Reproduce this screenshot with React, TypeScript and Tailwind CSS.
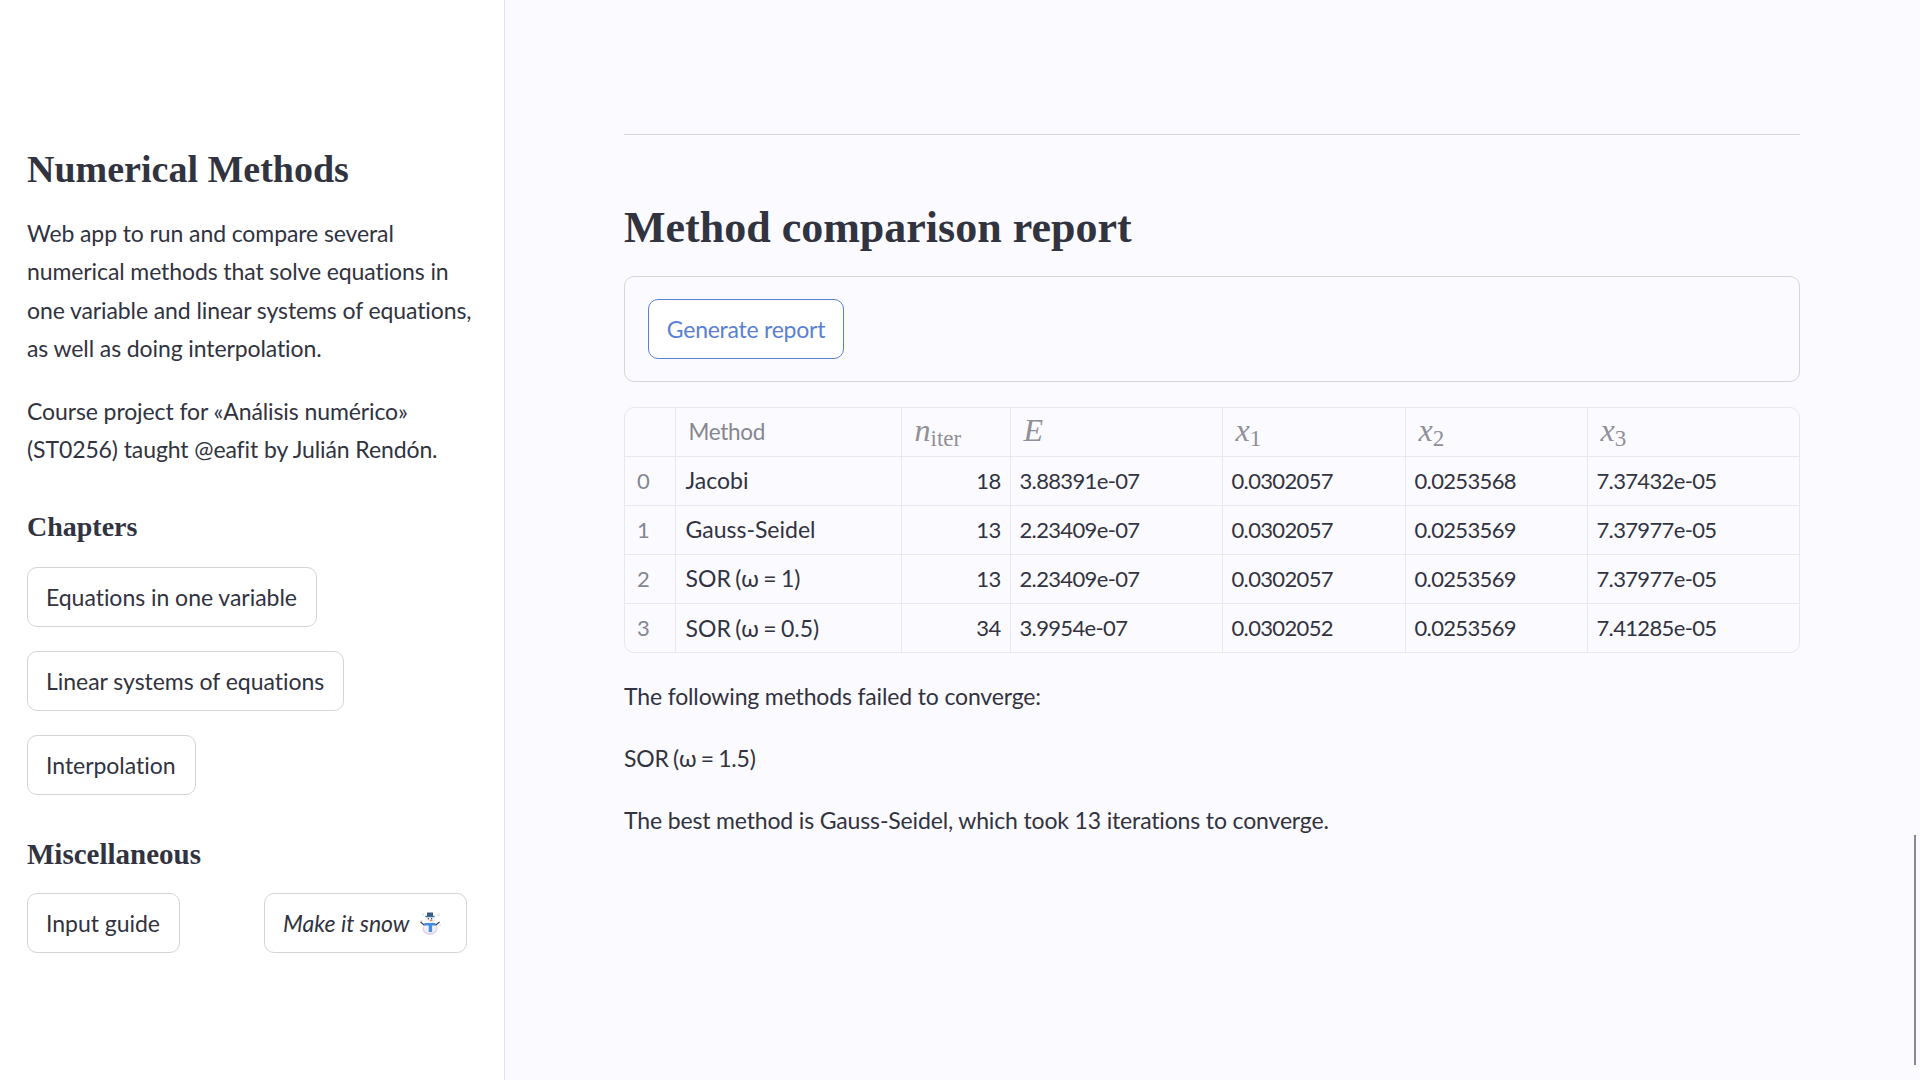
const sans = "font-['Lato','Noto_Sans',sans-serif]";

const rows = [
  ["0", "Jacobi", "18", "3.88391e-07", "0.0302057", "0.0253568", "7.37432e-05"],
  ["1", "Gauss-Seidel", "13", "2.23409e-07", "0.0302057", "0.0253569", "7.37977e-05"],
  ["2", "SOR (ω = 1)", "13", "2.23409e-07", "0.0302057", "0.0253569", "7.37977e-05"],
  ["3", "SOR (ω = 0.5)", "34", "3.9954e-07", "0.0302052", "0.0253569", "7.41285e-05"],
];

function SideButton({ label }: { label: string }) {
  return (
    <button className="h-[60px] w-fit rounded-[10px] border border-[#d5d5d9] bg-white pl-[18px] pr-[19px] text-left text-[23px] tracking-[-0.03px] text-[#31333f]">
      {label}
    </button>
  );
}

function Snowman() {
  return (
    <svg viewBox="0 0 24 24" className="ml-[8px] h-6 w-6">
      <circle cx="3.5" cy="10" r="1.3" fill="#e2dff0" />
      <circle cx="20.5" cy="4" r="1.3" fill="#e2dff0" />
      <circle cx="5" cy="3.5" r="1" fill="#e2dff0" />
      <circle cx="22" cy="14" r="1" fill="#e2dff0" />
      <ellipse cx="12" cy="17.5" rx="7.5" ry="6.5" fill="#dcd3ee" />
      <ellipse cx="12" cy="16.5" rx="6.5" ry="5.5" fill="#f3f0fa" />
      <circle cx="12" cy="8.5" r="5" fill="#f5f3fb" />
      <path d="M7.5 4.8h9v1.4h-9z" fill="#2f6f9e" />
      <path d="M9 1.5h6v3.5H9z" fill="#3a5c86" />
      <path d="M6.5 12h11v2.4h-3.4V21h-3.4v-6.6H6.5z" fill="#3f8ee8" />
      <path d="M12 8.6l3.4 1-3.4.9z" fill="#f08a3c" />
      <circle cx="10.4" cy="7.8" r=".7" fill="#333" />
      <circle cx="13.6" cy="7.8" r=".7" fill="#333" />
      <path d="M2.5 11l4 3.2M21.5 11l-4 3.2" stroke="#3b3f52" strokeWidth="1.2" />
    </svg>
  );
}

function MathHead({ base, sub }: { base: string; sub?: string }) {
  return (
    <span className="font-['Liberation_Serif',serif] text-[32px] leading-none text-[#8f9098]">
      <i>{base}</i>
      {sub && <span className="relative top-[5px] text-[23px]">{sub}</span>}
    </span>
  );
}

export default function App() {
  return (
    <div className={`flex h-screen overflow-hidden bg-[#fbfaff] text-[#31333f] ${sans}`}>
      {/* Sidebar */}
      <aside className="h-full w-[505px] shrink-0 border-r border-[#e3e2ea] bg-white pl-[27px] pr-[24px] pt-[145px]">
        <h2 className="font-['Liberation_Serif',serif] text-[38px] font-bold leading-[48px]">Numerical Methods</h2>
        <p className="mt-[21px] text-[23px] leading-[38.4px] tracking-[-0.1px]">
          Web app to run and compare several numerical methods that solve equations in one variable and linear systems of equations, as well as doing interpolation.
        </p>
        <p className="mt-6 text-[23px] leading-[38.4px] tracking-[-0.1px]">
          Course project for «Análisis numérico» (ST0256) taught @eafit by Julián Rendón.
        </p>
        <h3 className="mt-[41px] font-['Liberation_Serif',serif] text-[28px] font-bold leading-9">Chapters</h3>
        <div className="mt-[22px] flex flex-col gap-6">
          <SideButton label="Equations in one variable" />
          <SideButton label="Linear systems of equations" />
          <SideButton label="Interpolation" />
        </div>
        <h3 className="mt-[41px] font-['Liberation_Serif',serif] text-[29px] font-bold leading-9">Miscellaneous</h3>
        <div className="mt-[21px] grid grid-cols-[237px_1fr]">
          <SideButton label="Input guide" />
          <button className="flex h-[60px] w-[203px] items-center rounded-[10px] border border-[#d5d5d9] bg-white pl-[18px] text-[23px] italic">
            Make it snow
            <Snowman />
          </button>
        </div>
      </aside>

      {/* Main */}
      <main className="relative min-w-0 flex-1 pl-[119px] pr-[120px] pt-[134px]">
        <hr className="border-t border-[#d5d5dc]" />
        <h1 className="mt-[65px] font-['Liberation_Serif',serif] text-[44px] font-bold leading-[56px]">Method comparison report</h1>
        <div className="mt-[20px] rounded-[10px] border border-[#d5d5dc] pl-[23px] pt-[22px] pb-[22px]">
          <button className="h-[60px] w-[196px] rounded-[10px] border border-[#5b7fd6] bg-white text-[23px] tracking-[-0.25px] text-[#5b7fd6]">
            Generate report
          </button>
        </div>
        <div className="mt-[25px] overflow-hidden rounded-[10px] border border-[#e8e8ee]">
          <table className="w-full table-fixed border-collapse text-[22px] tracking-[-0.65px]">
            <colgroup>
              <col className="w-[50px]" />
              <col className="w-[226px]" />
              <col className="w-[109px]" />
              <col className="w-[212px]" />
              <col className="w-[183px]" />
              <col className="w-[182px]" />
              <col />
            </colgroup>
            <thead>
              <tr className="h-[48px] text-left">
                <th className="border-r border-[#e8e8ee]" />
                <th className="border-r border-[#e8e8ee] pl-[13px] text-[22.5px] font-normal tracking-[-0.3px] text-[#85868f]">Method</th>
                <th className="border-r border-[#e8e8ee] pl-[13px] font-normal tracking-normal"><MathHead base="n" sub="iter" /></th>
                <th className="border-r border-[#e8e8ee] pl-[13px] font-normal tracking-normal"><MathHead base="E" /></th>
                <th className="border-r border-[#e8e8ee] pl-[13px] font-normal tracking-normal"><MathHead base="x" sub="1" /></th>
                <th className="border-r border-[#e8e8ee] pl-[13px] font-normal tracking-normal"><MathHead base="x" sub="2" /></th>
                <th className="pl-[13px] font-normal tracking-normal"><MathHead base="x" sub="3" /></th>
              </tr>
            </thead>
            <tbody>
              {rows.map((r) => (
                <tr key={r[0]} className="h-[49px] border-t border-[#e8e8ee]">
                  <td className="border-r border-[#e8e8ee] pl-[12px] text-[#85868f]">{r[0]}</td>
                  <td className="border-r border-[#e8e8ee] pl-[10px] text-[23px] tracking-normal [word-spacing:-1.5px]">{r[1]}</td>
                  <td className="border-r border-[#e8e8ee] pr-[9px] text-right">{r[2]}</td>
                  <td className="border-r border-[#e8e8ee] pl-[9px]">{r[3]}</td>
                  <td className="border-r border-[#e8e8ee] pl-[9px]">{r[4]}</td>
                  <td className="border-r border-[#e8e8ee] pl-[9px]">{r[5]}</td>
                  <td className="pl-[9px]">{r[6]}</td>
                </tr>
              ))}
            </tbody>
          </table>
        </div>
        <div className="mt-[24px] flex flex-col gap-[23.4px] text-[23px] leading-[38.4px] tracking-[-0.15px]">
          <p>The following methods failed to converge:</p>
          <p className="[word-spacing:-1.5px]">SOR (ω = 1.5)</p>
          <p>The best method is Gauss-Seidel, which took 13 iterations to converge.</p>
        </div>
        {/* scrollbar thumb */}
        <div className="absolute right-[4px] top-[835px] h-[230px] w-[2px] bg-[#8a8a8a]" />
      </main>
    </div>
  );
}
